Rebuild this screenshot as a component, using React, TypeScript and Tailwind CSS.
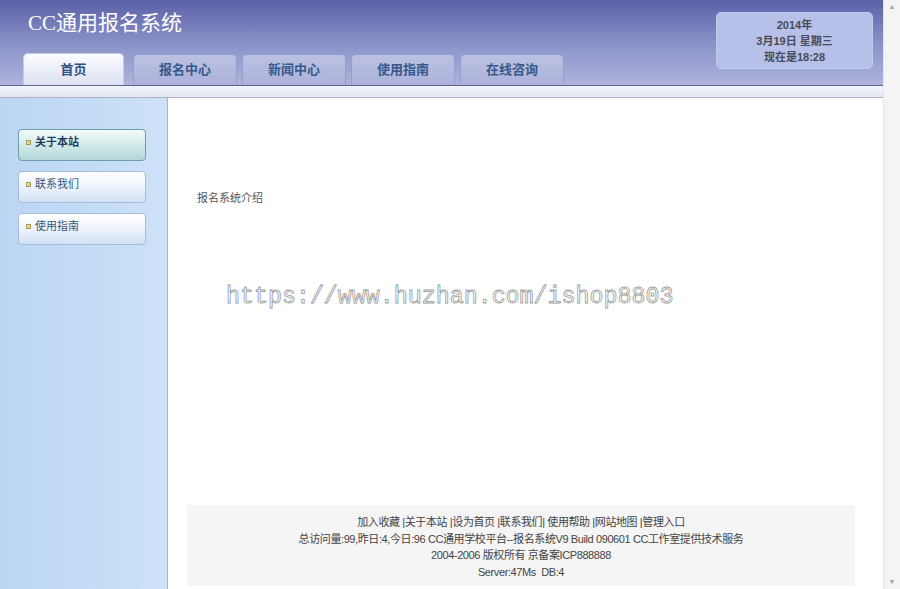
const tabs = ["报名中心", "新闻中心", "使用指南", "在线咨询"];

const sideLinks = [
  { label: "关于本站", active: true },
  { label: "联系我们", active: false },
  { label: "使用指南", active: false },
];

function Bullet() {
  return (
    <span className="mr-[4px] inline-block h-[5px] w-[5px] border border-[#a89a5c] bg-[#e6d58e]" />
  );
}

export default function App() {
  return (
    <div className="flex h-[589px] w-[900px] overflow-hidden bg-white font-['Liberation_Sans','Noto_Sans_CJK_SC',sans-serif]">
      <div className="flex w-[883px] flex-col">
        {/* header */}
        <header className="relative h-[86px] border-b border-[#5d6699] bg-gradient-to-b from-[#5b60a6] via-[#8a91c8] to-[#aeb4dc]">
          <div className="flex items-start justify-between">
            <h1 className="ml-[28px] mt-[10px] font-['Liberation_Serif','Noto_Sans_CJK_SC',serif] text-[21px] leading-[26px] text-white">
              CC通用报名系统
            </h1>
            <div className="mr-[10px] mt-[12px] flex h-[57px] w-[157px] flex-col items-center justify-center rounded-[5px] border border-[#c3cbec] bg-[#b7c0e8] text-[11px] font-bold leading-[16px] text-[#474a58]">
              <span>2014年</span>
              <span>3月19日 星期三</span>
              <span>现在是18:28</span>
            </div>
          </div>
          <nav className="absolute bottom-0 left-[23px] flex items-end">
            <div className="flex h-[32px] w-[101px] items-center justify-center rounded-t-[5px] border border-b-0 border-[#c7cce6] bg-gradient-to-b from-[#fbfcff] to-[#dde1f1] text-[13px] font-bold text-[#2e5283]">
              首页
            </div>
            {tabs.map((t, i) => (
              <div
                className={`flex h-[31px] w-[104px] items-center justify-center rounded-t-[5px] border border-b-0 border-[#969ecd] bg-gradient-to-b from-[#bcc1e3] to-[#abb1da] text-[13px] font-bold text-[#36598a] ${i === 0 ? "ml-[9px]" : "ml-[5px]"}`}
                key={t}
              >
                {t}
              </div>
            ))}
          </nav>
        </header>
        <div className="h-[12px] border-b border-[#aeb3c8] bg-gradient-to-b from-[#f4f5fb] to-[#e3e6f1]" />

        {/* body */}
        <div className="flex flex-1">
          <aside className="w-[168px] border-r border-[#9fb6d6] bg-gradient-to-r from-[#bbd5f3] to-[#cde2f8] pt-[31px]">
            <ul className="flex flex-col gap-[10px] pl-[18px]">
              {sideLinks.map((l) => (
                <li
                  className={`flex h-[32px] w-[128px] items-start rounded-[4px] border pl-[7px] pt-[5px] text-[11px] leading-[14px] ${
                    l.active
                      ? "border-[#6f9fa6] bg-gradient-to-b from-[#f4fbfb] via-[#d3eaea] to-[#b3d6d7] font-bold text-[#1f3e5f]"
                      : "border-[#a5bddd] bg-gradient-to-b from-[#ffffff] via-[#eef3fb] to-[#d2e1f4] text-[#3a5577]"
                  }`}
                  key={l.label}
                >
                  <span className="flex items-center">
                    <Bullet />
                    {l.label}
                  </span>
                </li>
              ))}
            </ul>
          </aside>

          <main className="flex flex-1 flex-col">
            <p className="pl-[29px] pt-[94px] text-[11px] leading-[13px] text-[#555]">
              报名系统介绍
            </p>
            <p className="ml-[58px] mt-[78px] font-['Liberation_Mono',monospace] text-[23.3px] leading-[28px] text-transparent [-webkit-text-stroke:0.8px_#9a9a9a]">
              https://www.huzhan.com/ishop8803
            </p>
            <footer className="mb-[3px] ml-[19px] mr-[28px] mt-auto flex h-[81px] flex-col items-center bg-[#f5f5f5] pt-[9px] text-[11px] leading-[16.5px] tracking-[-0.4px] text-[#444]">
              <span>加入收藏 |关于本站 |设为首页 |联系我们| 使用帮助 |网站地图 |管理入口</span>
              <span>
                总访问量:99,昨日:4,今日:96 CC通用学校平台--报名系统V9 Build 090601 CC工作室提供技术服务
              </span>
              <span>2004-2006 版权所有 京备案ICP888888</span>
              <span>Server:47Ms&nbsp; DB:4</span>
            </footer>
          </main>
        </div>
      </div>

      {/* scrollbar */}
      <div className="flex w-[17px] flex-col items-center justify-between border-l border-[#e6e6e6] bg-[#f4f4f4] py-[2px] text-[7px] leading-[10px] text-[#a3a3a3]">
        <span>▲</span>
        <span>▼</span>
      </div>
    </div>
  );
}
